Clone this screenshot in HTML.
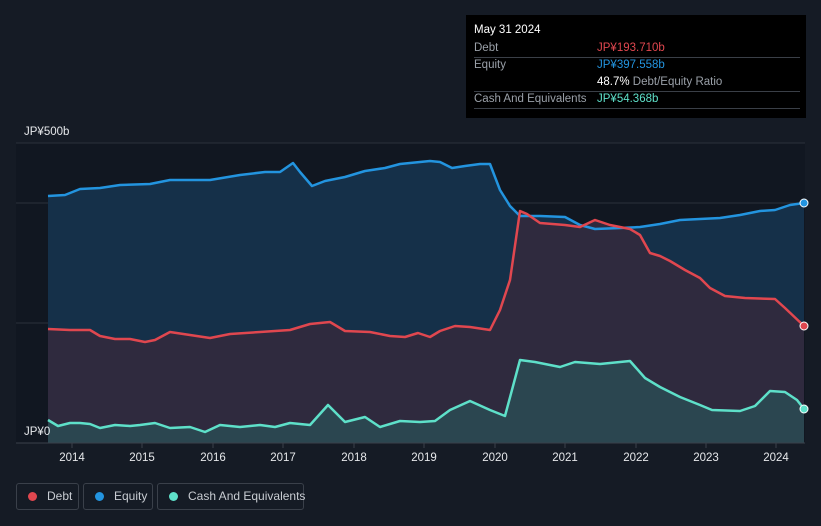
<!DOCTYPE html><html><head><style>
body{margin:0;width:821px;height:526px;background:#151b25;font-family:"Liberation Sans",sans-serif;overflow:hidden;position:relative}
.tip{position:absolute;left:466px;top:15px;width:340px;height:103px;background:#000;}
.row{position:absolute;left:8px;width:326px;border-bottom:1px solid #3a3f47;font-size:11.5px;color:#9aa0a8;height:17px;line-height:17px;white-space:nowrap}
.lg{position:absolute;top:483px;height:27px;border:1px solid #3a404a;border-radius:3px;color:#c8ccd2;font-size:12px;line-height:25px;box-sizing:border-box;white-space:nowrap}
.dot{display:inline-block;width:9px;height:9px;border-radius:50%;margin:0 10px 0 11px;vertical-align:-1px}
</style></head><body>
<svg width="821" height="526" style="position:absolute;left:0;top:0">
<rect x="16" y="143" width="789" height="300" fill="#111721"/>
<line x1="16" y1="143" x2="805" y2="143" stroke="#2a313c"/>
<line x1="16" y1="203" x2="805" y2="203" stroke="#2a313c"/>
<line x1="16" y1="323" x2="805" y2="323" stroke="#2a313c"/>
<path d="M48,196 L65,195 80,189 100,188 120,185 150,184 170,180 210,180 240,175 265,172 280,172 293,163 300,172 312,186 325,181 345,177 365,171 385,168 400,164 430,161 440,162 452,168 465,166 480,164 490,164 500,190 510,206 520,216 540,216 565,217 580,225 595,229 620,228 640,227 660,224 680,220 700,219 720,218 740,215 760,211 775,210 790,205 804,203 L804,443 48,443Z" fill="#153049"/>
<path d="M48,329 L70,330 90,330 100,336 115,339 130,339 145,342 155,340 170,332 190,335 210,338 230,334 260,332 290,330 310,324 330,322 345,331 370,332 390,336 405,337 418,333 430,337 440,331 455,326 470,327 490,330 500,310 510,280 520,211 527,214 540,223 565,225 580,227 595,220 610,225 630,229 640,235 650,253 660,256 670,261 685,270 700,278 710,288 725,296 745,298 775,299 785,308 804,326 L804,443 48,443Z" fill="#2f2a3e"/>
<path d="M48,420 L58,426 70,423 80,423 90,424 100,428 115,425 130,426 140,425 155,423 170,428 190,427 205,432 220,425 240,427 260,425 275,427 290,423 310,425 328,405 345,422 365,417 380,427 400,421 420,422 435,421 450,410 470,401 490,410 505,416 520,360 535,362 560,367 575,362 600,364 630,361 645,378 660,387 680,397 700,405 712,410 740,411 755,406 770,391 785,392 797,400 804,409 L804,443 48,443Z" fill="#2b4650"/>
<g fill="none" stroke-width="2.5" stroke-linejoin="round">
<path d="M48,196 L65,195 80,189 100,188 120,185 150,184 170,180 210,180 240,175 265,172 280,172 293,163 300,172 312,186 325,181 345,177 365,171 385,168 400,164 430,161 440,162 452,168 465,166 480,164 490,164 500,190 510,206 520,216 540,216 565,217 580,225 595,229 620,228 640,227 660,224 680,220 700,219 720,218 740,215 760,211 775,210 790,205 804,203" stroke="#2394df"/>
<path d="M48,329 L70,330 90,330 100,336 115,339 130,339 145,342 155,340 170,332 190,335 210,338 230,334 260,332 290,330 310,324 330,322 345,331 370,332 390,336 405,337 418,333 430,337 440,331 455,326 470,327 490,330 500,310 510,280 520,211 527,214 540,223 565,225 580,227 595,220 610,225 630,229 640,235 650,253 660,256 670,261 685,270 700,278 710,288 725,296 745,298 775,299 785,308 804,326" stroke="#e0474f"/>
<path d="M48,420 L58,426 70,423 80,423 90,424 100,428 115,425 130,426 140,425 155,423 170,428 190,427 205,432 220,425 240,427 260,425 275,427 290,423 310,425 328,405 345,422 365,417 380,427 400,421 420,422 435,421 450,410 470,401 490,410 505,416 520,360 535,362 560,367 575,362 600,364 630,361 645,378 660,387 680,397 700,405 712,410 740,411 755,406 770,391 785,392 797,400 804,409" stroke="#5ee0c9"/>
</g>
<circle cx="804" cy="203" r="4" fill="#2394df" stroke="#fff" stroke-width="1"/>
<circle cx="804" cy="326" r="4" fill="#e0474f" stroke="#fff" stroke-width="1"/>
<circle cx="804" cy="409" r="4" fill="#5ee0c9" stroke="#fff" stroke-width="1"/>
<line x1="16" y1="443" x2="805" y2="443" stroke="#3a404a"/>
<g stroke="#3a404a"><line x1="72" y1="443" x2="72" y2="448"/><line x1="142" y1="443" x2="142" y2="448"/><line x1="213" y1="443" x2="213" y2="448"/><line x1="283" y1="443" x2="283" y2="448"/><line x1="354" y1="443" x2="354" y2="448"/><line x1="424" y1="443" x2="424" y2="448"/><line x1="495" y1="443" x2="495" y2="448"/><line x1="565" y1="443" x2="565" y2="448"/><line x1="636" y1="443" x2="636" y2="448"/><line x1="706" y1="443" x2="706" y2="448"/><line x1="776" y1="443" x2="776" y2="448"/></g>
<g fill="#e6e8eb" font-size="11.5" font-family="Liberation Sans" text-anchor="middle">
<text x="72" y="461">2014</text><text x="142" y="461">2015</text><text x="213" y="461">2016</text><text x="283" y="461">2017</text><text x="354" y="461">2018</text><text x="424" y="461">2019</text><text x="495" y="461">2020</text><text x="565" y="461">2021</text><text x="636" y="461">2022</text><text x="706" y="461">2023</text><text x="776" y="461">2024</text>
</g>
<text x="24" y="135" fill="#e6e8eb" font-size="11.5" font-family="Liberation Sans">JP¥500b</text>
<text x="24" y="435" fill="#e6e8eb" font-size="11.5" font-family="Liberation Sans">JP¥0</text>
</svg>
<div class="tip">
<div style="position:absolute;left:8px;top:9px;color:#fff;font-size:11.5px">May 31 2024</div>
<div class="row" style="top:25px">Debt<span style="position:absolute;left:123px;color:#e0474f">JP¥193.710b</span></div>
<div class="row" style="top:42px;border:none">Equity<span style="position:absolute;left:123px;color:#2394df">JP¥397.558b</span></div>
<div class="row" style="top:59px"><span style="position:absolute;left:123px;color:#9aa0a8"><b style="color:#fff;font-weight:normal">48.7%</b> Debt/Equity Ratio</span></div>
<div class="row" style="top:76px">Cash And Equivalents<span style="position:absolute;left:123px;color:#5ee0c9">JP¥54.368b</span></div>
</div>
<div class="lg" style="left:16px;width:63px"><span class="dot" style="background:#e0474f"></span>Debt</div>
<div class="lg" style="left:83px;width:70px"><span class="dot" style="background:#2394df"></span>Equity</div>
<div class="lg" style="left:157px;width:147px"><span class="dot" style="background:#5ee0c9"></span>Cash And Equivalents</div>
</body></html>
